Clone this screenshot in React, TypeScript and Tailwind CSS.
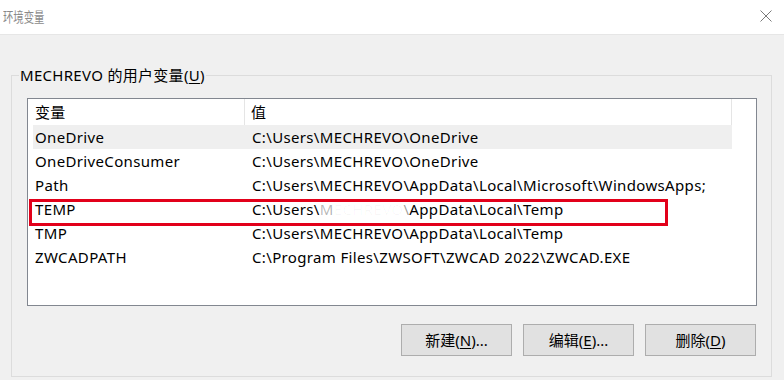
import React from "react";

const rows: { name: string; value: string; selected?: boolean; masked?: boolean }[] = [
  { name: "OneDrive", value: "C:\\Users\\MECHREVO\\OneDrive", selected: true },
  { name: "OneDriveConsumer", value: "C:\\Users\\MECHREVO\\OneDrive" },
  { name: "Path", value: "C:\\Users\\MECHREVO\\AppData\\Local\\Microsoft\\WindowsApps;" },
  { name: "TEMP", value: "", masked: true },
  { name: "TMP", value: "C:\\Users\\MECHREVO\\AppData\\Local\\Temp" },
  { name: "ZWCADPATH", value: "C:\\Program Files\\ZWSOFT\\ZWCAD 2022\\ZWCAD.EXE" },
];

function Btn({ label, k, tail }: { label: string; k: string; tail: string }) {
  return (
    <button className="w-[111px] h-[32px] bg-[#e1e1e1] border border-[#adadad] text-[15px] text-black flex items-center justify-center">
      <span>
        {label}(<span className="underline underline-offset-2">{k}</span>){tail}
      </span>
    </button>
  );
}

export default function App() {
  return (
    <div
      className="w-[784px] h-[380px] bg-[#f0f0f0] overflow-hidden text-black"
      style={{ fontFamily: '"Noto Sans", "Noto Sans CJK SC", sans-serif' }}
    >
      <div className="h-[35px] bg-white border-b border-[#e6e6e6] flex items-center justify-between pl-[3px] pr-[12px]">
        <span className="text-[14px] text-[#8a8a8a] inline-block scale-x-[0.74] origin-left leading-none">环境变量</span>
        <svg width="12" height="12" viewBox="0 0 12 12" className="mt-[-2px]">
          <path d="M0.5 0.5 L11.5 11.5 M11.5 0.5 L0.5 11.5" stroke="#7a7a7a" strokeWidth="1" fill="none" />
        </svg>
      </div>
      <div className="pl-[11px] pr-[12px] pt-[30px]">
        <fieldset className="border border-[#dcdcdc] h-[312px] pl-[15px] pr-[14px] pb-[20px] flex flex-col">
          <legend className="ml-[-8px] px-[1px] text-[15px] leading-[20px] tracking-[0.3px]">
            MECHREVO 的用户变量(<span className="underline underline-offset-2">U</span>)
          </legend>
          <div className="relative mt-[13px] h-[208px] bg-white border border-[#828790] pl-[5px] pt-0 tracking-[0.35px]">
            <div className="flex h-[26px] w-[699px] text-[15px]">
              <div className="w-[212px] border-r border-[#e5e5e5] flex items-center pl-[2px]">变量</div>
              <div className="flex-1 border-r border-[#e5e5e5] flex items-center pl-[6px]">值</div>
            </div>
            {rows.map((r) => (
              <div
                key={r.name}
                className={`flex h-[24px] w-[699px] text-[15px] items-center ${r.selected ? "bg-[#efefef]" : ""}`}
              >
                <div className="w-[212px] pl-[2px] whitespace-nowrap">{r.name}</div>
                <div className="flex-1 pl-[7px] whitespace-nowrap">
                  {r.masked ? (
                    <>
                      C:\Users\
                      <span className="text-black/30">M</span>
                      <span className="text-black/[0.03]">ECHREVO</span>
                      <span className="text-black/40">\</span>
                      AppData\Local\Temp
                    </>
                  ) : (
                    r.value
                  )}
                </div>
              </div>
            ))}
            <div className="absolute left-[1px] top-[100px] w-[639px] h-[27px] border-[3px] border-[#e2001a]" />
          </div>
          <div className="mt-[18px] flex justify-end gap-[11px] pr-[1px]">
            <Btn label="新建" k="N" tail="..." />
            <Btn label="编辑" k="E" tail="..." />
            <Btn label="删除" k="D" tail="" />
          </div>
        </fieldset>
      </div>
    </div>
  );
}
